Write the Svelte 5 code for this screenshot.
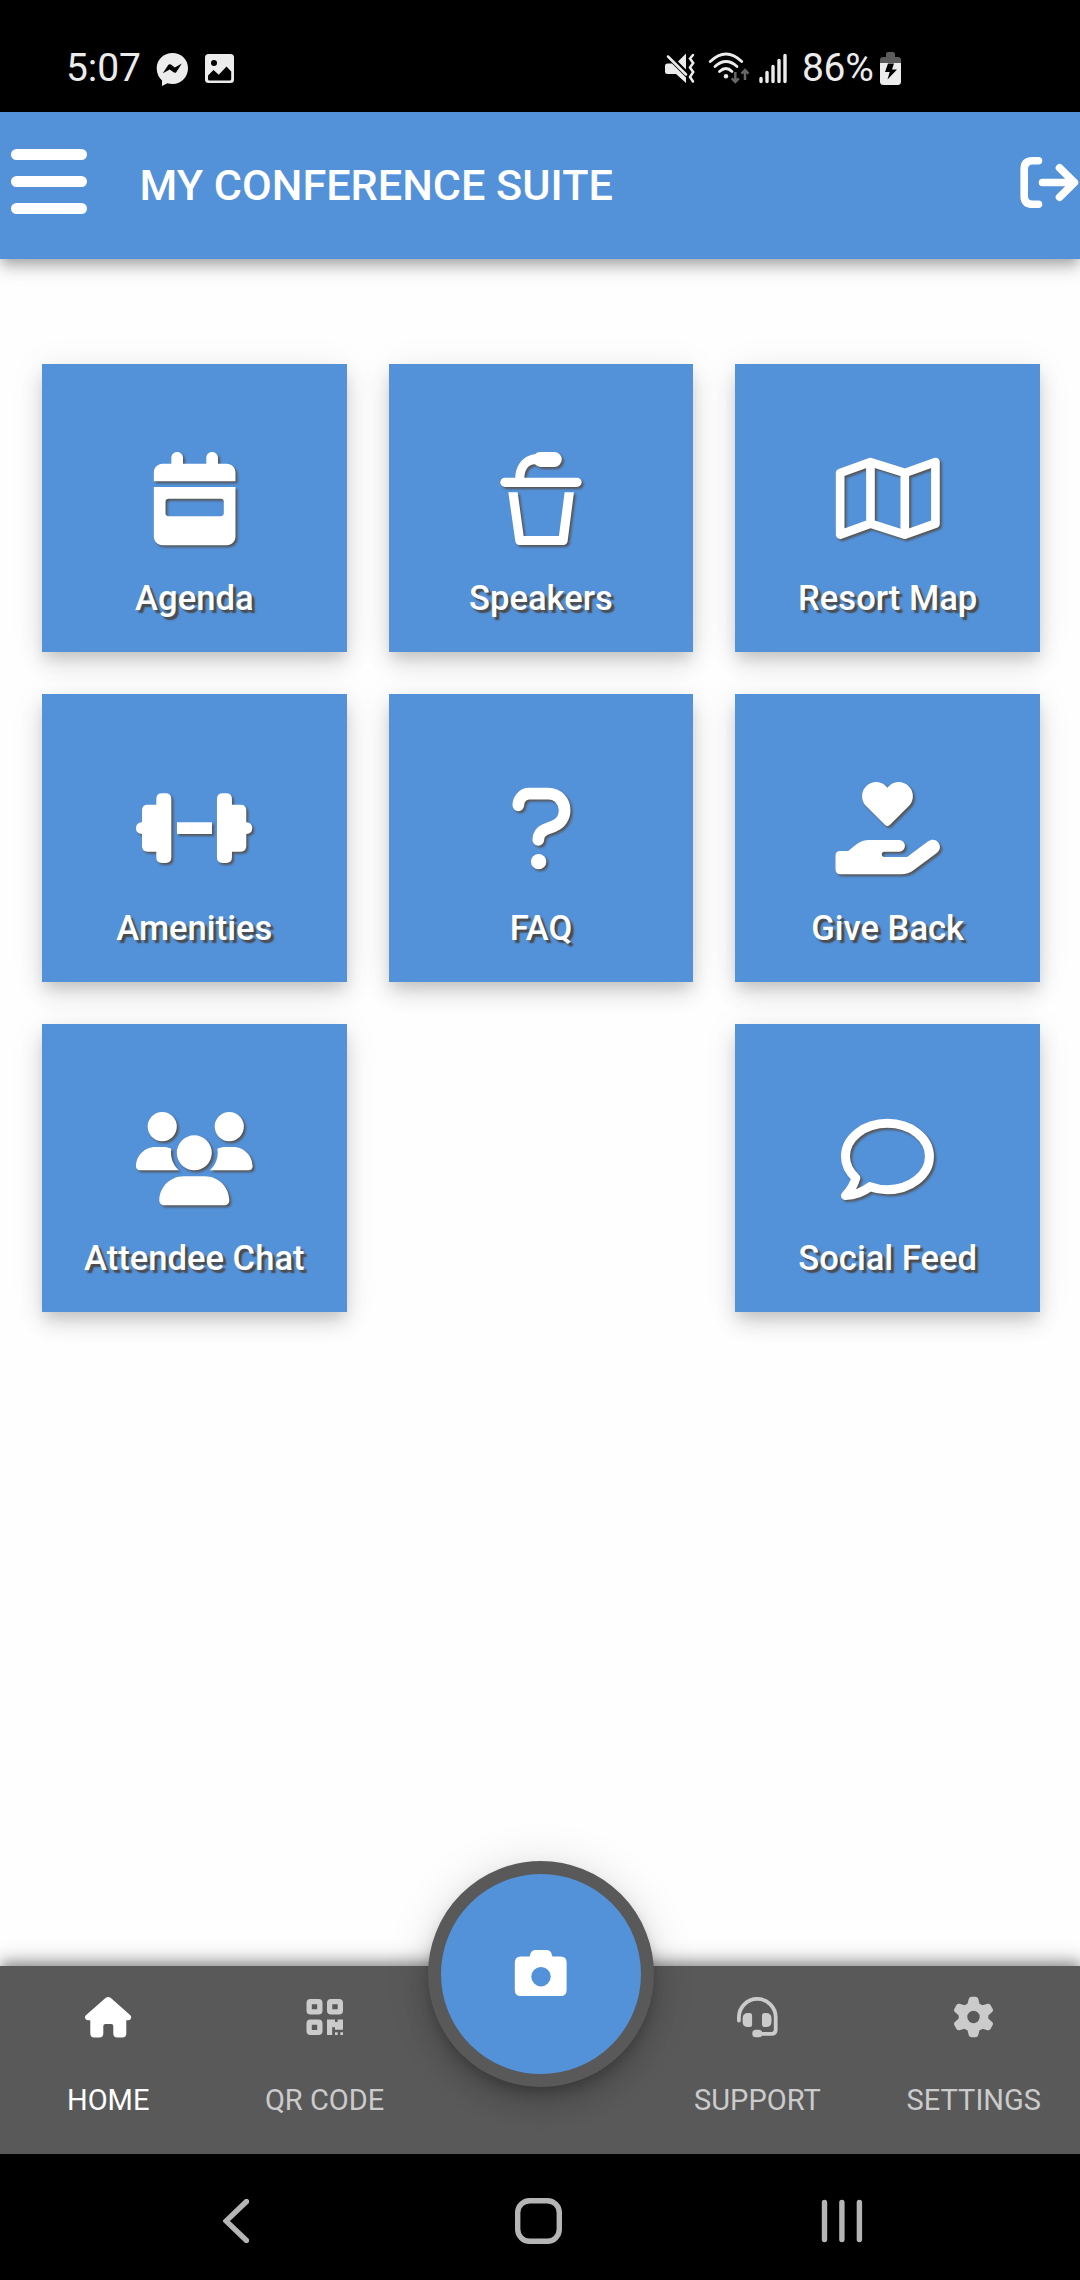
<script>
  const tiles = [
    { label: 'Agenda', icon: 'calendar' },
    { label: 'Speakers', icon: 'podium' },
    { label: 'Resort Map', icon: 'map' },
    { label: 'Amenities', icon: 'dumbbell' },
    { label: 'FAQ', icon: 'question' },
    { label: 'Give Back', icon: 'hand' },
    { label: 'Attendee Chat', icon: 'users' },
    null,
    { label: 'Social Feed', icon: 'comment' }
  ];

  const viewBoxes = {
    calendar: '-98 0 640 512',
    podium: '338 336 350 280',
    map: '357.5 336 350 280',
    dumbbell: '348 306 350 280',
    question: '338 306 350 280',
    hand: '357.5 306 350 280',
    users: '0 0 640 512',
    comment: '357.5 306 350 280'
  };
</script>

<div class="screen">
  <div class="status">
    <div class="group">
      <span class="clock">5:07</span>
      <svg class="messenger" viewBox="156 52 33 36" width="33" height="36">
        <path fill="#ececec" d="M172.5 53c9 0 15.500 6.800 15.500 15.300S181.500 84 172.500 84c-1.800 0-3.500-.2-5.100-.7L162 86v-5.500c-3.300-2.800-5.300-7.200-5.300-12.200 0-8.500 6.800-15.300 15.800-15.300z" />
        <path fill="#000" d="M162.800 73.300l5.400-8.300q1.200-1.500 2.800-.4l3.800 2.800 7-3.800-5.400 8.300q-1.200 1.500-2.800.4l-3.800-2.800z" />
      </svg>
      <svg class="picture" viewBox="205 54 29 29" width="29" height="29">
        <rect x="205" y="54" width="29" height="29" rx="3.500" fill="#ececec" />
        <circle cx="214" cy="63" r="3" fill="#000" />
        <path fill="#000" d="M208 75.500l5.500-5.500 5.300 4.700 7.700-8.200 4.700 5V79q0 1.500-1.500 1.500h-20.200q-1.500 0-1.500-1.500z" />
      </svg>
    </div>
    <div class="group">
      <svg viewBox="664 52 32 33" width="32" height="33">
        <path fill="#ececec" d="M665 66q0-2.500 2.500-2.500h4.500L686 77.500V83l-10-9h-8.500q-2.500 0-2.500-2.500zM678 61.500l8-8v16z" />
        <path d="M668 56.500l18 18" stroke="#ececec" stroke-width="2.500" stroke-linecap="round" />
        <path d="M693 55l-3 3.500 3.200 4.500-3.200 4.500 3.200 4.500-3.200 5 3 4.500" fill="none" stroke="#ececec" stroke-width="2.500" stroke-linecap="round" />
      </svg>
      <svg class="wifi" viewBox="708 51 42 34" width="42" height="34">
        <g fill="none" stroke="#ececec" stroke-width="2.800" stroke-linecap="round">
          <path d="M710.300 61.500Q726 46.500 741.700 61.500" />
          <path d="M715 66.500Q726 56.500 737 66.500" />
          <path d="M719.500 71.500Q726 65.500 732 71.500" />
        </g>
        <circle cx="726" cy="76.300" r="2.200" fill="#ececec" />
        <path d="M735.300 72v9.500m-3.500-3.200l3.500 3.700 3.500-3.700M745 80v-9.500m-3.500 3.200l3.500-3.700 3.500 3.700" fill="none" stroke="#666" stroke-width="2.500" />
      </svg>
      <svg class="signal" viewBox="759 52 29 31" width="29" height="31">
        <g stroke="#ececec" stroke-width="3.400" stroke-linecap="round">
          <path d="M761 77.500v3M767 71.500v9M773 65.500v15M779 59.500v21M785 54.500v26" />
        </g>
      </svg>
      <span class="percent">86%</span>
      <svg class="battery" viewBox="880 51 21 33" width="21" height="33">
        <path fill="#5c5c5c" d="M886 53q0-2 2-2h5q2 0 2 2v3h3q3 0 3 3v3.500h-21V59q0-3 3-3h3z" />
        <path fill="#ececec" d="M880 62h21v18.500q0 3.500-3.500 3.500h-14q-3.500 0-3.500-3.500z" />
        <path fill="#000" d="M888 62.500h6l-2 6h5l-9.500 10 2.200-7.500H885z" />
      </svg>
    </div>
  </div>

  <header>
    <button class="menu" aria-label="Menu"><i></i><i></i><i></i></button>
    <h1>MY CONFERENCE SUITE</h1>
    <svg class="logout" viewBox="1020 156 60 54" width="60" height="54">
      <g fill="none" stroke="#fff" stroke-width="7.600" stroke-linecap="round" stroke-linejoin="round">
        <path d="M1038.500 160.800h-6q-8.300 0-8.300 8.300v26.800q0 8.300 8.300 8.300h6" />
        <path d="M1042.500 182.500h31M1059.500 167.800l14.900 14.700-14.900 14.700" />
      </g>
    </svg>
  </header>

  <main>
    {#each tiles as tile}
      {#if tile}
        <div class="tile">
          <svg class="icon" viewBox={viewBoxes[tile.icon]} fill="#fff">
            {#if tile.icon === 'calendar'}
              <path fill-rule="evenodd" d="M128 0c17.700 0 32 14.300 32 32V64H288V32c0-17.700 14.300-32 32-32s32 14.300 32 32V64h48c26.500 0 48 21.500 48 48v48H0V112C0 85.500 21.500 64 48 64H96V32c0-17.700 14.300-32 32-32zM0 192H448V464c0 26.500-21.500 48-48 48H48c-26.500 0-48-21.500-48-48V192zm80 64c-8.800 0-16 7.200-16 16v64c0 8.800 7.200 16 16 16H368c8.800 0 16-7.200 16-16V272c0-8.800-7.200-16-16-16H80z" />
            {:else if tile.icon === 'podium'}
              <path d="M435 416C435 374 461 346 494 343Q500 336 510 336H552a22 22 0 0 1 0 45H510Q500 380 494 373C474 373 462 390 462 416z" />
              <rect x="390" y="413" width="244" height="28" rx="14" />
              <path d="M414 457H442L460 588H566L583 457H611L592 604Q590 615 579 615H447Q437 615 435 604z" />
            {:else if tile.icon === 'map'}
              <g fill="none" stroke="#fff" stroke-width="26" stroke-linejoin="round">
                <path d="M391 399L482 366 585 399 677 366V551L585 584 482 551 391 584zM482 366V551M585 399V584" />
              </g>
            {:else if tile.icon === 'dumbbell'}
              <path d="M409 357q0-17 17-17h11q17 0 17 17v175q0 17-17 17h-11q-17 0-17-17v-17h-26q-17 0-17-17v-36q-18-2-18-17.500t18-17.500v-36q0-17 17-17h26zM636 357q0-17-17-17h-11q-17 0-17 17v175q0 17 17 17h11q17 0 17-17v-17h26q17 0 17-17v-36q18-2 18-17.500t-18-17.500v-36q0-17-17-17h-26zM471 427h105v35H471z" />
            {:else if tile.icon === 'question'}
              <path d="M444 376C444 357 458 341 477 341H534C563 341 583 364 583 391C583 412 571 430 552 438L524 449C511 455 504 465 504 480" fill="none" stroke="#fff" stroke-width="35" stroke-linecap="round" />
              <circle cx="505" cy="545" r="23" />
            {:else if tile.icon === 'hand'}
              <path d="M526 435L468 377C453 362 453 335 468 320C484 302 512 302 527 317L533 323 539 317C554 302 582 302 598 320C613 335 613 362 598 377L540 435Q533 441 526 435z" />
              <path d="M391 513H415L440 493Q457 480 478 480H568a17 17 0 0 1 0 35H524a8 8 0 0 0 0 16H592L655 484C679 467 704 499 682 518L612 570Q595 583 574 583H393Q377 583 377 567V527Q377 513 391 513z" />
            {:else if tile.icon === 'users'}
              <path d="M144 0a80 80 0 1 1 0 160A80 80 0 1 1 144 0zM512 0a80 80 0 1 1 0 160A80 80 0 1 1 512 0zM0 298.700C0 239.800 47.800 192 106.700 192h42.700c15.900 0 31 3.500 44.600 9.700c-1.300 7.200-1.900 14.700-1.900 22.300c0 38.200 16.800 72.500 43.300 96H21.300C9.600 320 0 310.400 0 298.700zM405.300 320c26.600-23.500 43.300-57.800 43.300-96c0-7.600-.7-15-1.900-22.300c13.600-6.300 28.700-9.700 44.600-9.700h42.700C592.200 192 640 239.800 640 298.700c0 11.800-9.600 21.300-21.300 21.300H405.300zM224 224a96 96 0 1 1 192 0 96 96 0 1 1-192 0zM128 485.300C128 411.700 187.700 352 261.300 352H378.700C452.300 352 512 411.700 512 485.300c0 14.700-11.900 26.700-26.700 26.700H154.700c-14.700 0-26.700-11.900-26.700-26.700z" />
            {:else if tile.icon === 'comment'}
              <path d="M481 530C497 536 515 539 533 539C602 539 659 494 659 439.500C659 384 602 340 533 340C463 340 407 384 407 439.500C407 463 419 486 438 504C433 523 424 540 407 557C437 556 460 546 481 530z" fill="none" stroke="#fff" stroke-width="27" stroke-linejoin="round" />
            {/if}
          </svg>
          <span>{tile.label}</span>
        </div>
      {:else}
        <div></div>
      {/if}
    {/each}
  </main>

  <nav>
    <div class="tab active">
      <svg viewBox="84 1996 48 42" width="48" height="42" fill="currentColor">
        <path d="M105.800 1997.800q2.400-1.800 4.800 0l19.700 17.400q1.700 2 .2 4-.8 1-2.300 1h-1.900v13.300q0 4-4 4h-5q-4 0-4-4v-7.500q0-2-2-2h-6q-2 0-2 2v7.500q0 4-4 4h-5q-4 0-4-4v-13.300H88q-1.500 0-2.300-1-1.500-2 .2-4z" />
      </svg>
      <span>HOME</span>
    </div>
    <div class="tab">
      <svg viewBox="306 1996 38 42" width="38" height="42" fill="currentColor">
        <path fill-rule="evenodd" d="M310.500 1999h8q4 0 4 4v7.500q0 4-4 4h-8q-4 0-4-4V2003q0-4 4-4zm1.300 5.200v5h5.400v-5zM331 1999h8q4 0 4 4v7.500q0 4-4 4h-8q-4 0-4-4V2003q0-4 4-4zm1.300 5.200v5h5.400v-5zM310.500 2019.500h8q4 0 4 4v7.500q0 4-4 4h-8q-4 0-4-4v-7.500q0-4 4-4zm1.300 5.200v5.300h5.400v-5.300z" />
        <path d="M327 2019.500h8v2.600h2.600v-2.600h5.400v10.300h-8v-2.600h-2.800v7.800H327zM335 2032.300h2.700v2.700H335zM340.300 2032.300h2.700v2.700h-2.700z" />
      </svg>
      <span>QR CODE</span>
    </div>
    <div class="tab"></div>
    <div class="tab">
      <svg viewBox="736 1996 43 42" width="43" height="42">
        <path d="M738.900 2020.500v-3.200a18.400 18.400 0 0 1 36.800 0v12.500q0 4-4 4h-13" fill="none" stroke="currentColor" stroke-width="3.800" stroke-linecap="round" />
        <path fill="currentColor" d="M742.600 2018.500q0-5.500 5.500-5.500h1.500q2.500 0 2.500 2.500v9q0 2.500-2.500 2.500h-1.500q-5.500 0-5.500-5.500zM771.500 2018.500q0-5.500-5.500-5.500h-1.500q-2.500 0-2.500 2.500v9q0 2.500 2.500 2.500h1.500q5.500 0 5.500-5.500z" />
        <rect x="752.300" y="2029.700" width="10" height="7.600" rx="3.600" fill="currentColor" />
      </svg>
      <span>SUPPORT</span>
    </div>
    <div class="tab">
      <svg viewBox="-20.500 -21 41 42" width="41" height="42" fill="currentColor">
        <path fill-rule="evenodd" d="M-4.700-18.300Q-4-20.300-2-20.300H2Q4-20.300 4.700-18.300L6-13.300Q7.500-12.800 9-11.700L14-13.200Q15.800-13.700 17-12L19.200-8Q20-6.300 18.600-5L14.800-1.500V1.500L18.600 5Q20 6.300 19.200 8L17 12Q15.800 13.700 14 13.200L9 11.700Q7.500 12.800 6 13.300L4.700 18.300Q4 20.300 2 20.300H-2Q-4 20.300-4.700 18.300L-6 13.300Q-7.500 12.800-9 11.700L-14 13.200Q-15.800 13.700-17 12L-19.200 8Q-20 6.300-18.600 5L-14.800 1.500V-1.500L-18.600-5Q-20-6.300-19.200-8L-17-12Q-15.800-13.700-14-13.200L-9-11.700Q-7.500-12.800-6-13.300zM0-6.200A6.200 6.200 0 1 0 0 6.200A6.200 6.200 0 1 0 0-6.200z" />
      </svg>
      <span>SETTINGS</span>
    </div>
    <button class="fab" aria-label="Camera">
      <svg viewBox="514 1949 53 46" width="53" height="46">
        <path fill="#fff" fill-rule="evenodd" d="M530.500 1952.500q1.200-3.500 4.800-3.500h11.400q3.600 0 4.800 3.500l.9 3h8.200q6 0 6 6v27.500q0 6-6 6h-39.800q-6 0-6-6v-27.500q0-6 6-6h8.800zM541 1966a9.700 9.700 0 1 0 0 19.400a9.700 9.700 0 1 0 0-19.400z" />
      </svg>
    </button>
  </nav>

  <div class="system">
    <svg viewBox="0 0 26 44" width="26" height="44"><path d="M23.500 2.500L3 22 23.500 41.500" /></svg>
    <svg viewBox="0 0 47 46" width="47" height="46"><rect x="2.700" y="2.700" width="41.600" height="40.600" rx="12" /></svg>
    <svg viewBox="0 0 42 44" width="42" height="44"><path d="M3.500 3.500v37M20.900 3.500v37M38.400 3.500v37" /></svg>
  </div>
</div>

<style>
  :global(body) {
    margin: 0;
    background: #fff;
  }
  .screen {
    width: 1080px;
    height: 2280px;
    display: flex;
    flex-direction: column;
    overflow: hidden;
    background: #fefefe;
    font-family: Roboto, 'Liberation Sans', sans-serif;
  }
  svg {
    display: block;
    flex: none;
  }
  button {
    border: 0;
    padding: 0;
    margin: 0;
    background: none;
  }
  .status {
    flex: none;
    height: 112px;
    box-sizing: border-box;
    padding: 46px 179px 0 66px;
    display: flex;
    justify-content: space-between;
    background: #000;
    color: #ececec;
    font-size: 39px;
    line-height: 44px;
  }
  .group {
    display: flex;
    align-items: center;
    height: 44px;
  }
  .clock {
    width: 90px;
    letter-spacing: -0.1px;
  }
  .messenger {
    margin-top: 4px;
  }
  .picture {
    margin-left: 16px;
    margin-top: 1px;
  }
  .wifi {
    margin-left: 12px;
  }
  .signal {
    margin-left: 9px;
  }
  .percent {
    width: 78px;
    margin-left: 14px;
    letter-spacing: -0.3px;
  }
  header {
    flex: none;
    height: 147px;
    box-sizing: border-box;
    padding-left: 11px;
    display: flex;
    align-items: center;
    position: relative;
    background: #5391d9;
    box-shadow: 0 5px 10px -3px rgba(0, 0, 0, 0.2), 0 10px 13px rgba(0, 0, 0, 0.14),
      0 3px 26px rgba(0, 0, 0, 0.12);
  }
  .menu {
    width: 76px;
    height: 65px;
    margin-bottom: 8px;
    display: flex;
    flex-direction: column;
    justify-content: space-between;
  }
  .menu i {
    height: 11px;
    border-radius: 5.5px;
    background: #fff;
  }
  h1 {
    flex: 1;
    margin: 0 0 0 52.5px;
    color: #fff;
    font-size: 43.2px;
    font-weight: 500;
    line-height: 50px;
  }
  .logout {
    margin-bottom: 5px;
  }
  main {
    flex: 1;
    display: grid;
    grid-template-columns: repeat(3, 1fr);
    grid-auto-rows: 288px;
    gap: 42px;
    padding: 105px 40px 0 42px;
  }
  .tile {
    display: flex;
    flex-direction: column;
    align-items: center;
    padding-top: 88px;
    background: #5391d9;
    color: #fff;
    box-shadow: 0 8px 13px -3px rgba(0, 0, 0, 0.11), 0 12px 21px rgba(0, 0, 0, 0.11),
      0 3px 34px rgba(0, 0, 0, 0.07);
  }
  .icon {
    width: 116.6px;
    height: 93.3px;
    overflow: visible;
    filter: drop-shadow(2.6px 2.6px 1.3px #555);
  }
  .tile span {
    margin-top: 32px;
    font-size: 34.6px;
    font-weight: 500;
    line-height: 42px;
    text-shadow: 3px 3px 1.5px #4a4a4a;
    white-space: nowrap;
  }
  nav {
    flex: none;
    width: 1082px;
    height: 188px;
    position: relative;
    display: grid;
    grid-template-columns: repeat(5, 1fr);
    background: #595959;
    box-shadow: 0 -5px 10px -3px rgba(0, 0, 0, 0.25), 0 -8px 13px rgba(0, 0, 0, 0.17),
      0 -3px 26px rgba(0, 0, 0, 0.12);
  }
  .tab {
    display: flex;
    flex-direction: column;
    align-items: center;
    padding-top: 30px;
    color: #cbcbcb;
    font-size: 29px;
    line-height: 36px;
  }
  .tab span {
    margin-top: 44px;
  }
  .tab.active {
    color: #fff;
  }
  .fab {
    position: absolute;
    left: 428px;
    top: -105px;
    width: 226px;
    height: 226px;
    box-sizing: border-box;
    border: 13px solid #595959;
    border-radius: 50%;
    background: #5391d9;
    display: flex;
    align-items: center;
    justify-content: center;
    box-shadow: 0 8px 13px -3px rgba(0, 0, 0, 0.2), 0 16px 26px rgba(0, 0, 0, 0.14),
      0 3px 47px rgba(0, 0, 0, 0.12);
  }
  .fab svg {
    margin: 0 1px 3px 0;
  }
  .system {
    flex: none;
    height: 126px;
    box-sizing: border-box;
    position: relative;
    padding: 7px 86px 0 84px;
    width: 1080px;
    display: grid;
    grid-template-columns: repeat(3, 303px);
    place-items: center;
    align-content: center;
    background: #000;
  }
  .system svg {
    fill: none;
    stroke: #b5b5b5;
    stroke-width: 5.4;
    stroke-linecap: round;
  }
</style>
